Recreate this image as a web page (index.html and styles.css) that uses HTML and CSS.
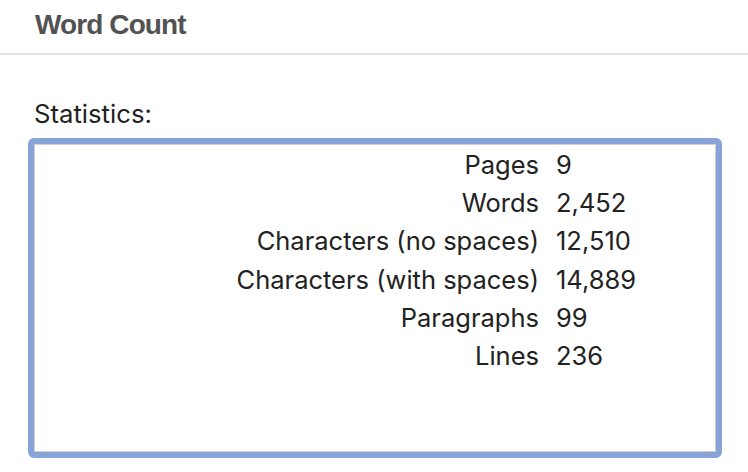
FILE: index.html
```html
<!DOCTYPE html>
<html lang="en">
<head>
<meta charset="utf-8">
<title>Word Count</title>
<link rel="stylesheet" href="styles.css">
</head>
<body>
<div class="window">
  <div class="header"><h1 class="title">Word Count</h1></div>
  <div class="content">
    <div class="section-label">Statistics:</div>
    <div class="stats-box">
      <div class="stats-inner">
        <div class="stats-grid">
          <div class="stat-label">Pages</div><div class="stat-value">9</div>
          <div class="stat-label">Words</div><div class="stat-value">2,452</div>
          <div class="stat-label">Characters (no spaces)</div><div class="stat-value">12,510</div>
          <div class="stat-label">Characters (with spaces)</div><div class="stat-value">14,889</div>
          <div class="stat-label">Paragraphs</div><div class="stat-value">99</div>
          <div class="stat-label">Lines</div><div class="stat-value">236</div>
        </div>
      </div>
    </div>
  </div>
</div>
</body>
</html>
```

FILE: styles.css
```css
html, body {
  margin: 0;
  padding: 0;
  background: #ffffff;
  overflow: hidden;
}
body {
  font-family: "Inter", "Noto Sans", sans-serif;
  color: #222222;
}
.window {
  margin: -8px -2px 0;
  border: 1px solid #d6d6d6;
  border-bottom: none;
  border-radius: 12px 12px 0 0;
  height: 500px;
}
.header {
  height: 60px;
  border-bottom: 2px solid #e4e4e4;
  padding-left: 36px;
  display: flex;
  align-items: center;
}
.title {
  margin: 0;
  font-family: "Liberation Sans", Arial, sans-serif;
  font-weight: bold;
  font-size: 28px;
  letter-spacing: -0.9px;
  color: #525252;
  padding-top: 4px;
}
.content {
  padding: 44px 0 0 29px;
}
.section-label {
  font-size: 25.7px;
  line-height: 30px;
  padding-left: 6px;
  color: #222222;
}
.stats-box {
  margin-top: 9px;
  width: 694px;
  height: 320px;
  box-sizing: border-box;
  border: 6px solid #87a3d7;
  border-radius: 6px;
}
.stats-inner {
  height: 100%;
  box-sizing: border-box;
  border: 1px solid #cfcfcf;
}
.stats-grid {
  display: grid;
  grid-template-columns: 504px 1fr;
  column-gap: 17px;
  padding-top: 1px;
  font-size: 25.5px;
  line-height: 38.2px;
  color: #222222;
}
.stat-label {
  text-align: right;
}
.stat-value {
  text-align: left;
}
```
